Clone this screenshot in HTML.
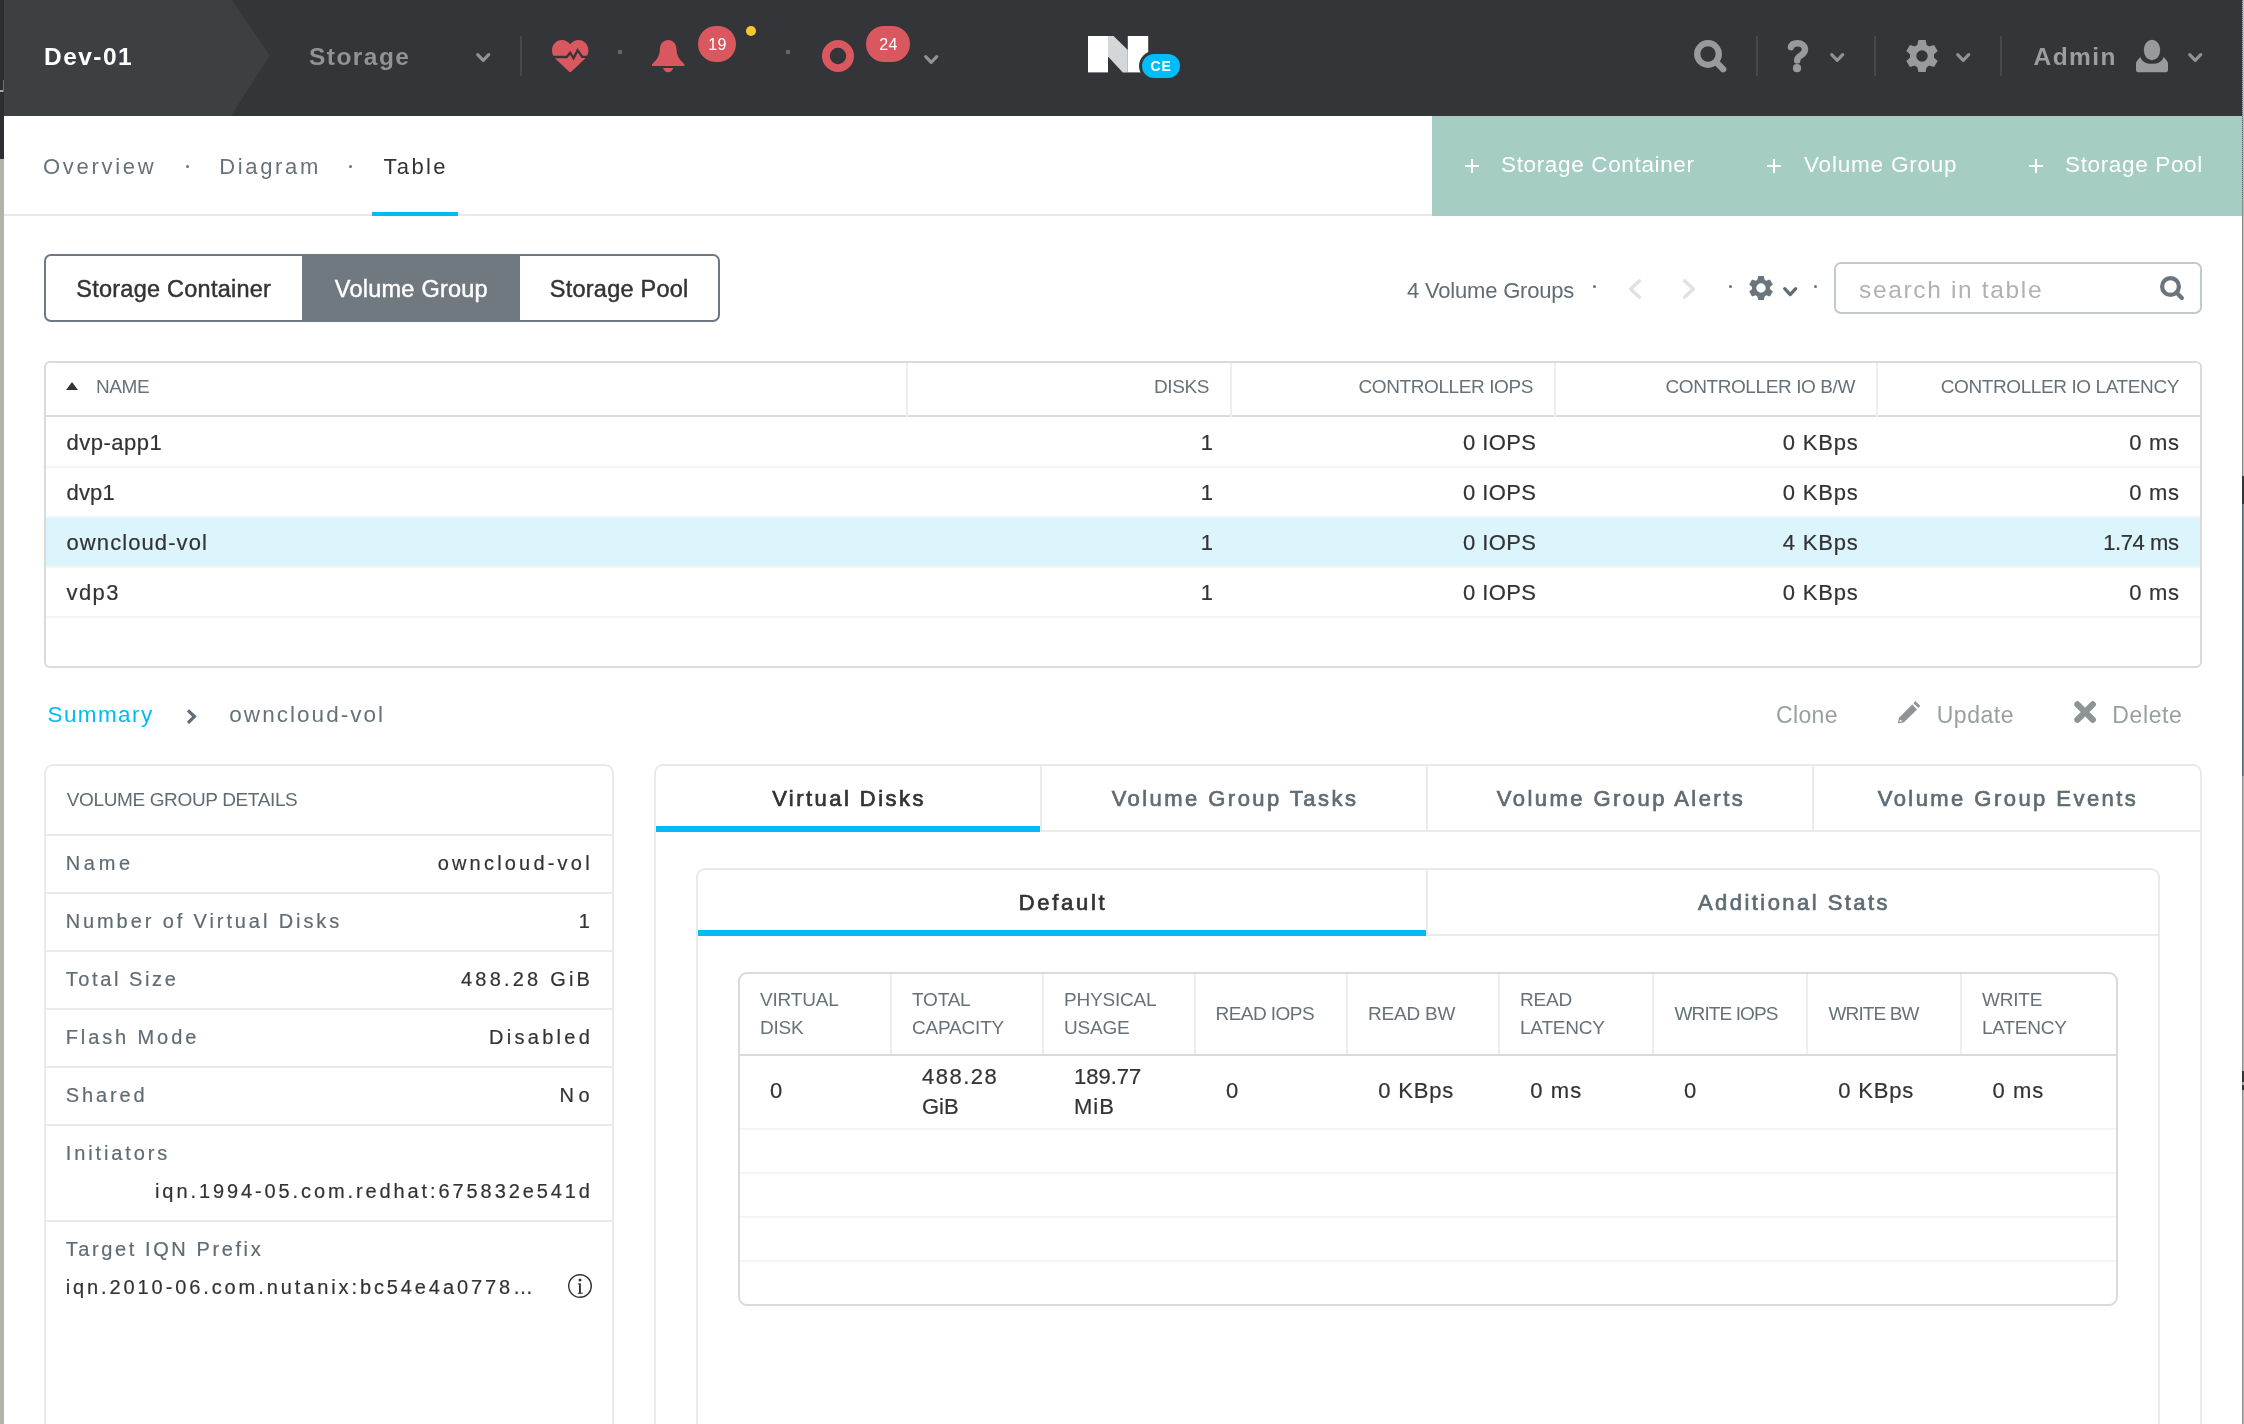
<!DOCTYPE html>
<html lang="en">
<head>
<meta charset="utf-8">
<title>Dev-01 - Storage</title>
<style>
*{box-sizing:border-box;margin:0;padding:0}
html,body{width:2244px;height:1424px;overflow:hidden;background:#fff}
body{position:relative;font-family:"Liberation Sans",sans-serif;color:#333;-webkit-font-smoothing:antialiased}
#app{position:absolute;left:0;top:0;width:2244px;height:1424px;overflow:hidden;will-change:transform}
.abs{position:absolute}
.t{position:absolute;white-space:nowrap;line-height:40px;height:40px}
svg{position:absolute;overflow:visible}

/* window edges from the app behind */
#edgeL1{left:0;top:0;width:4px;height:159px;background:#2d2e31}
#edgeL2{left:0;top:159px;width:4px;height:1265px;background:#b3b3ae}
#edgeRa{left:2242px;top:0;width:1px;height:1424px;background:
 linear-gradient(to bottom,transparent 0,transparent 200px,#8a8d8e 200px,#8a8d8e 476px,#343537 476px,#343537 504px,#5d6670 504px,#5d6670 776px,#8e9091 776px,#8e9091 1071px,#333 1071px,#333 1082px,#8e9091 1082px,#8e9091 1085px,#333 1085px,#333 1090px,#8e9091 1090px),
 repeating-linear-gradient(to bottom,#5f6c7a 0,#5f6c7a 1px,#a3a5a6 1px,#a3a5a6 2px)}
#edgeRb{left:2243px;top:0;width:1px;height:1424px;background:
 linear-gradient(to bottom,#bcbcb9 0,#bcbcb9 476px,#343537 476px,#343537 504px,#7b8a95 504px,#7b8a95 776px,#b5b5b0 776px,#b5b5b0 1071px,#3a3a3a 1071px,#3a3a3a 1082px,#b5b5b0 1082px,#b5b5b0 1085px,#3a3a3a 1085px,#3a3a3a 1090px,#b5b5b0 1090px)}
#edgeMk1{left:3px;top:80px;width:1px;height:12px;background:#6b6c6d}
#edgeMk2{left:0;top:90px;width:3px;height:2px;background:#a9aaaa}

/* ---------- top bar ---------- */
#top{left:4px;top:0;width:2238px;height:116px;background:#333538}
.hb{font-weight:700;font-size:24.5px;letter-spacing:1.45px}
.vdiv{position:absolute;top:36px;width:2px;height:40px;background:#46484b}
.sq{position:absolute;top:50px;width:4px;height:4px;background:#65676a}
.badge{position:absolute;top:26px;height:36px;border-radius:18px;background:#d9575f;color:#fff;font-size:16px;line-height:37px;text-align:center;letter-spacing:.4px;padding-left:1px}

/* ---------- sub nav ---------- */
#sub{left:4px;top:116px;width:2238px;height:100px;background:#fff;border-bottom:2px solid #e6e8e9}
.nav{font-size:22px;letter-spacing:2.7px;color:#66727a}
#green{left:1432px;top:116px;width:810px;height:100px;background:#a6cdc3}
.gt{font-size:22.5px;letter-spacing:.65px;color:#fff;margin-top:.5px}

/* ---------- toolbar ---------- */
#seg{left:44px;top:254px;width:676px;height:68px;border:2px solid #6f7880;border-radius:7px;background:#fff;overflow:hidden}
#segA{left:302px;top:254px;width:218px;height:68px;background:#707880}
.sg{font-size:23.5px;letter-spacing:.24px;margin-top:.5px;color:#333;-webkit-text-stroke:.45px #333}
#sbox{left:1834px;top:262px;width:368px;height:52px;border:2px solid #c3cacc;border-radius:7px;background:#fff}
.dot{position:absolute;top:285px;width:3px;height:3px;border-radius:2px;background:#66727a}

/* ---------- main table ---------- */
#mt{left:44px;top:361px;width:2158px;height:307px;border:2px solid #d9dbdb;border-radius:6px;background:#fff}
.mth{position:absolute;left:46px;top:363px;width:2154px;height:54px;border-bottom:2px solid #d9dbdb}
.cs{position:absolute;top:363px;width:2px;height:54px;background:#eceeef}
.th{font-size:19px;color:#66727a;letter-spacing:-.4px}
.rowline{position:absolute;left:46px;width:2154px;height:2px;background:#f4f5f5}
.td{margin-top:1px;font-size:22px;color:#333;line-height:50px;height:50px;-webkit-text-stroke:.2px #333}
.r{text-align:right}

/* ---------- summary bar ---------- */
.sm{margin-top:1px;font-size:22.5px;letter-spacing:1.6px}
.act{margin-top:1px;font-size:23px;color:#999f9f;letter-spacing:.3px}

/* ---------- panels ---------- */
.panel{position:absolute;border:2px solid #e8eaeb;border-radius:9px;background:#fff}
.hl{position:absolute;height:2px;background:#e8eaeb}
.vl{position:absolute;width:2px;background:#e8eaeb}
.dl{font-size:20px;letter-spacing:2.9px;color:#606c74;-webkit-text-stroke:.2px #606c74}
.dv{font-size:20px;letter-spacing:2.9px;color:#333;text-align:right;-webkit-text-stroke:.2px #333}
.tab{font-size:22px;letter-spacing:2.45px;color:#606c74;text-align:center;-webkit-text-stroke:.7px currentColor;padding-left:2px}
.ih{font-size:19px;color:#66727a;line-height:28px;height:auto;letter-spacing:-.2px}
.id{font-size:22px;color:#333;line-height:30px;height:auto;-webkit-text-stroke:.2px #333}
</style>
</head>
<body>
<div id="app">

<!-- ================= TOP BAR ================= -->
<div class="abs" id="top"></div>
<div class="abs" id="edgeL1"></div>
<div class="abs" id="edgeL2"></div>
<div class="abs" id="edgeRa"></div>
<div class="abs" id="edgeRb"></div>
<div class="abs" id="edgeMk1"></div>
<div class="abs" id="edgeMk2"></div>

<svg style="left:4px;top:0" width="270" height="116"><polygon points="0,0 228,0 266,55.5 227,116 0,116" fill="#3e3f42"/></svg>
<div class="t hb" id="hd1" style="left:44px;top:37px;color:#fff">Dev-01</div>
<div class="t hb" id="hd2" style="left:309px;top:37px;color:#8f9396">Storage</div>
<svg style="left:476px;top:52.6px" width="15" height="10"><polyline points="1.7,1.7 7.2,7.3 12.7,1.7" fill="none" stroke="#8f9396" stroke-width="3.2" stroke-linecap="round" stroke-linejoin="round"/></svg>
<div class="vdiv" style="left:520px"></div>

<div class="sq" style="left:618px"></div>
<div class="sq" style="left:786px"></div>
<div class="badge" style="left:698px;width:38px">19</div>
<div class="abs" style="left:746px;top:26px;width:10px;height:10px;border-radius:5px;background:#fcc72e"></div>
<div class="badge" style="left:866px;width:44px">24</div>
<svg style="left:924px;top:54.8px" width="15" height="10"><polyline points="1.7,1.7 7.2,7.3 12.7,1.7" fill="none" stroke="#8f9396" stroke-width="3.2" stroke-linecap="round" stroke-linejoin="round"/></svg>

<div class="vdiv" style="left:1756px"></div>
<div class="vdiv" style="left:1874px"></div>
<div class="vdiv" style="left:2000px"></div>
<svg style="left:1830px;top:52.6px" width="15" height="10"><polyline points="1.7,1.7 7.2,7.3 12.7,1.7" fill="none" stroke="#8f9396" stroke-width="3.2" stroke-linecap="round" stroke-linejoin="round"/></svg>
<svg style="left:1956px;top:52.6px" width="15" height="10"><polyline points="1.7,1.7 7.2,7.3 12.7,1.7" fill="none" stroke="#8f9396" stroke-width="3.2" stroke-linecap="round" stroke-linejoin="round"/></svg>
<svg style="left:2188px;top:52.6px" width="15" height="10"><polyline points="1.7,1.7 7.2,7.3 12.7,1.7" fill="none" stroke="#8f9396" stroke-width="3.2" stroke-linecap="round" stroke-linejoin="round"/></svg>
<div class="t hb" id="hd3" style="left:2033.5px;top:37px;color:#9b9d9f">Admin</div>


<!-- health heart -->
<svg style="left:552px;top:40px" width="36.4" height="32.3" viewBox="0 0 36.4 32.3">
  <path d="M16.9,31.4 L3.4,18.7 C1,16.2 0,13.2 0,10.2 C0,4.5 4.4,0 9.8,0 C13.2,0 16.3,1.6 18.2,4.3 C20.1,1.6 23.2,0 26.6,0 C32,0 36.4,4.5 36.4,10.2 C36.4,13.2 35.4,16.2 33,18.7 L19.5,31.4 C18.7,32.2 17.7,32.2 16.9,31.4 Z" fill="#d9575f"/>
  <polyline points="-0.5,17 14.7,17 18.1,12.7 21.6,18.2 25.6,10.2 30.2,16.8 37,16.8" fill="none" stroke="#333538" stroke-width="2.3" stroke-linejoin="miter"/>
</svg>
<!-- alerts bell -->
<svg style="left:651.8px;top:40px" width="32.4" height="32.3" viewBox="0 0 32.4 32.3">
  <path d="M16.2,0 C11.5,0 8.2,3.6 8,8.5 C7.8,13 6.6,17.3 3.6,20.6 L0,24.2 L0,25.9 L32.4,25.9 L32.4,24.2 L28.8,20.6 C25.8,17.3 24.6,13 24.4,8.5 C24.2,3.6 20.9,0 16.2,0 Z" fill="#d9575f"/>
  <path d="M11,28 L21.4,28 C20.3,30.6 18.4,32.3 16.2,32.3 C14,32.3 12.1,30.6 11,28 Z" fill="#d9575f"/>
</svg>
<!-- tasks ring -->
<svg style="left:822px;top:40px" width="32" height="32"><circle cx="16" cy="16" r="12.1" fill="none" stroke="#d9575f" stroke-width="7.8"/></svg>

<!-- Nutanix N + CE -->
<svg style="left:1086px;top:34px" width="98" height="46">
  <rect x="2" y="2" width="20" height="36.4" fill="#fff"/>
  <rect x="41.8" y="2" width="20.4" height="36.4" fill="#fff"/>
  <polygon points="22,2 27.6,2 41.8,16 41.8,38.4 36.8,38.4 22,22.4" fill="#d4d6d7"/>
  <rect x="53" y="17" width="44" height="30" rx="15" fill="#333538"/>
  <rect x="56" y="20" width="38" height="24" rx="12" fill="#00bdf9"/>
</svg>
<div class="t" style="left:1142px;top:46px;width:38px;text-align:center;color:#fff;font-size:14px;font-weight:700;letter-spacing:.8px;padding-left:0px">CE</div>

<!-- search -->
<svg style="left:1694px;top:40px" width="33" height="33"><circle cx="14" cy="14" r="10.8" fill="none" stroke="#989b9d" stroke-width="6.3"/><line x1="22.5" y1="22.5" x2="29.2" y2="29.2" stroke="#989b9d" stroke-width="6.3" stroke-linecap="round"/></svg>
<!-- help -->
<svg style="left:1784px;top:36px" width="28" height="40"><path d="M6.9,11.2 C7.6,8.2 10.4,7.2 13.4,7.2 C17.6,7.2 21,9.6 21,13.5 C21,16.8 18.6,18.4 16.2,19.9 C14.1,21.2 13.2,22.3 13.2,24.4" fill="none" stroke="#989b9d" stroke-width="6.4" stroke-linecap="round"/><circle cx="13" cy="32.2" r="4.1" fill="#989b9d"/></svg>
<!-- settings gear -->
<svg style="left:1906px;top:40px" width="32" height="33" viewBox="-16 -16 32 33">
  <g fill="#989b9d">
    <polygon id="tooth" points="-3.6,-16 3.6,-16 4.9,-10 -4.9,-10"/>
    <polygon points="-3.6,-16 3.6,-16 4.9,-10 -4.9,-10" transform="rotate(60)"/>
    <polygon points="-3.6,-16 3.6,-16 4.9,-10 -4.9,-10" transform="rotate(120)"/>
    <polygon points="-3.6,-16 3.6,-16 4.9,-10 -4.9,-10" transform="rotate(180)"/>
    <polygon points="-3.6,-16 3.6,-16 4.9,-10 -4.9,-10" transform="rotate(240)"/>
    <polygon points="-3.6,-16 3.6,-16 4.9,-10 -4.9,-10" transform="rotate(300)"/>
  </g>
  <circle cx="0" cy="0" r="8.9" fill="none" stroke="#989b9d" stroke-width="6.4"/>
</svg>
<!-- user -->
<svg style="left:2136px;top:40px" width="32" height="33">
  <ellipse cx="16" cy="10" rx="8.2" ry="10.2" fill="#989b9d"/>
  <path d="M0,30 L0,24 C0,22 1,20.6 4.5,17 C6,22 10,23.8 16,23.8 C22,23.8 26,22 27.5,17 C31,20.6 32,22 32,24 L32,30 C32,31.2 31.2,32.2 30,32.2 L2,32.2 C0.8,32.2 0,31.2 0,30 Z" fill="#989b9d"/>
</svg>

<!-- ================= SUB NAV ================= -->
<div class="abs" id="sub"></div>
<div class="t nav" id="n1" style="left:43px;top:147px">Overview</div>
<div class="abs" style="left:186px;top:165px;width:3px;height:3px;border-radius:2px;background:#66727a"></div>
<div class="t nav" id="n2" style="left:219.3px;top:147px;letter-spacing:2.63px">Diagram</div>
<div class="abs" style="left:349px;top:165px;width:3px;height:3px;border-radius:2px;background:#66727a"></div>
<div class="t nav" id="n3" style="left:383.5px;top:147px;color:#333;letter-spacing:2.37px">Table</div>
<div class="abs" style="left:372px;top:212px;width:86px;height:4px;background:#00bbf3"></div>

<div class="abs" id="green"></div>
<svg style="left:1465px;top:159px" width="14" height="14"><path d="M7,0V14M0,7H14" stroke="#fff" stroke-width="2.1" fill="none"/></svg><svg style="left:1767px;top:159px" width="14" height="14"><path d="M7,0V14M0,7H14" stroke="#fff" stroke-width="2.1" fill="none"/></svg><svg style="left:2029px;top:159px" width="14" height="14"><path d="M7,0V14M0,7H14" stroke="#fff" stroke-width="2.1" fill="none"/></svg>
<div class="t gt" id="g1" style="left:1501px;top:144px">Storage Container</div>
<div class="t gt" id="g2" style="letter-spacing:.8px;left:1804px;top:144px">Volume Group</div>
<div class="t gt" id="g3" style="left:2065px;top:144px">Storage Pool</div>


<!-- ================= TOOLBAR ================= -->
<div class="abs" id="seg"></div>
<div class="abs" id="segA"></div>
<div class="t sg" id="sg1" style="left:76.3px;top:268px">Storage Container</div>
<div class="t sg" id="sg2" style="left:334.8px;top:268px;color:#fff;-webkit-text-stroke-color:#fff">Volume Group</div>
<div class="t sg" id="sg3" style="left:549.8px;top:268px">Storage Pool</div>

<div class="t" id="cnt" style="left:1407px;top:271px;font-size:22px;color:#606c74;letter-spacing:-.19px">4 Volume Groups</div>
<div class="dot" style="left:1593px"></div>
<svg style="left:1628px;top:279px" width="14" height="21"><polyline points="11.5,1.8 2.6,10 11.5,18.2" fill="none" stroke="#dfe2e3" stroke-width="3.4" stroke-linecap="round" stroke-linejoin="round"/></svg>
<svg style="left:1682px;top:279px" width="14" height="21"><polyline points="2.5,1.8 11.4,10 2.5,18.2" fill="none" stroke="#dfe2e3" stroke-width="3.4" stroke-linecap="round" stroke-linejoin="round"/></svg>
<div class="dot" style="left:1729px"></div>
<svg style="left:1749px;top:275.6px" width="24" height="24" viewBox="-12 -12 24 24">
  <g fill="#6b757d">
    <polygon points="-2.8,-12 2.8,-12 3.8,-7.4 -3.8,-7.4"/>
    <polygon points="-2.8,-12 2.8,-12 3.8,-7.4 -3.8,-7.4" transform="rotate(60)"/>
    <polygon points="-2.8,-12 2.8,-12 3.8,-7.4 -3.8,-7.4" transform="rotate(120)"/>
    <polygon points="-2.8,-12 2.8,-12 3.8,-7.4 -3.8,-7.4" transform="rotate(180)"/>
    <polygon points="-2.8,-12 2.8,-12 3.8,-7.4 -3.8,-7.4" transform="rotate(240)"/>
    <polygon points="-2.8,-12 2.8,-12 3.8,-7.4 -3.8,-7.4" transform="rotate(300)"/>
  </g>
  <circle cx="0" cy="0" r="6.9" fill="none" stroke="#6b757d" stroke-width="4.4"/>
</svg>
<svg style="left:1782.6px;top:287.4px" width="15" height="10"><polyline points="1.7,1.7 7.2,7.6 12.7,1.7" fill="none" stroke="#5f6a72" stroke-width="3.2" stroke-linecap="round" stroke-linejoin="round"/></svg>
<div class="dot" style="left:1814px"></div>
<div class="abs" id="sbox"></div>
<div class="t" id="ph" style="left:1859px;top:270px;font-size:24.5px;color:#b1b2ae;letter-spacing:1.66px">search in table</div>
<svg style="left:2160px;top:275.6px" width="25" height="25"><circle cx="10.5" cy="10.5" r="8.4" fill="none" stroke="#6b757d" stroke-width="4.2"/><line x1="16.8" y1="16.8" x2="21.8" y2="21.9" stroke="#6b757d" stroke-width="4.3" stroke-linecap="round"/></svg>

<!-- ================= MAIN TABLE ================= -->
<div class="abs" id="mt"></div>
<div class="mth"></div>
<div class="cs" style="left:906px"></div>
<div class="cs" style="left:1230px"></div>
<div class="cs" style="left:1554px"></div>
<div class="cs" style="left:1876px"></div>
<svg style="left:66px;top:382px" width="12" height="8"><polygon points="0,8 12,8 6,0" fill="#333"/></svg>
<div class="t th" id="h1" style="left:96px;top:367px">NAME</div>
<div class="t th r" id="h2" style="left:1009px;width:200px;top:367px">DISKS</div>
<div class="t th r" id="h3" style="left:1233px;width:300px;top:367px">CONTROLLER IOPS</div>
<div class="t th r" id="h4" style="left:1555px;width:300px;top:367px">CONTROLLER IO B/W</div>
<div class="t th r" id="h5" style="left:1879px;width:300px;top:367px">CONTROLLER IO LATENCY</div>

<div class="abs" style="left:46px;top:518px;width:2154px;height:48px;background:#dcf4fc"></div>
<div class="rowline" style="top:466px"></div>
<div class="rowline" style="top:516px"></div>
<div class="rowline" style="top:566px"></div>
<div class="rowline" style="top:616px"></div>

<div class="t td" id="r1a" style="left:66.5px;top:417px;letter-spacing:.49px">dvp-app1</div>
<div class="t td r" style="left:1013px;width:200px;top:417px">1</div>
<div class="t td r" id="r1c" style="left:1236.4px;width:300px;top:417px;letter-spacing:.4px">0 IOPS</div>
<div class="t td r" id="r1d" style="left:1558.6px;width:300px;top:417px;letter-spacing:.8px">0 KBps</div>
<div class="t td r" id="r1e" style="left:1879.7px;width:300px;top:417px;letter-spacing:.7px">0 ms</div>

<div class="t td" id="r2a" style="left:66.5px;top:467px;letter-spacing:.15px">dvp1</div>
<div class="t td r" style="left:1013px;width:200px;top:467px">1</div>
<div class="t td r" style="left:1236.4px;width:300px;top:467px;letter-spacing:.4px">0 IOPS</div>
<div class="t td r" style="left:1558.6px;width:300px;top:467px;letter-spacing:.8px">0 KBps</div>
<div class="t td r" style="left:1879.7px;width:300px;top:467px;letter-spacing:.7px">0 ms</div>

<div class="t td" id="r3a" style="left:66.5px;top:517px;letter-spacing:1.09px">owncloud-vol</div>
<div class="t td r" style="left:1013px;width:200px;top:517px">1</div>
<div class="t td r" style="left:1236.4px;width:300px;top:517px;letter-spacing:.4px">0 IOPS</div>
<div class="t td r" style="left:1558.6px;width:300px;top:517px;letter-spacing:.8px">4 KBps</div>
<div class="t td r" id="r3e" style="left:1878.6px;width:300px;top:517px;letter-spacing:-.4px">1.74 ms</div>

<div class="t td" id="r4a" style="left:66.5px;top:567px;letter-spacing:1.4px">vdp3</div>
<div class="t td r" style="left:1013px;width:200px;top:567px">1</div>
<div class="t td r" style="left:1236.4px;width:300px;top:567px;letter-spacing:.4px">0 IOPS</div>
<div class="t td r" style="left:1558.6px;width:300px;top:567px;letter-spacing:.8px">0 KBps</div>
<div class="t td r" style="left:1879.7px;width:300px;top:567px;letter-spacing:.7px">0 ms</div>

<!-- ================= SUMMARY BAR ================= -->
<div class="t sm" id="s1" style="left:47.5px;top:694px;color:#00bbf3;letter-spacing:1.4px">Summary</div>
<svg style="left:186px;top:709px" width="12" height="16"><polyline points="2,1.4 8.4,7.6 2,13.8" fill="none" stroke="#606c74" stroke-width="3.2" stroke-linejoin="miter"/></svg>
<div class="t sm" id="s2" style="left:229.3px;top:694px;color:#66727a;letter-spacing:2.04px">owncloud-vol</div>

<div class="t act" id="a1" style="left:1776px;top:694px;letter-spacing:.37px">Clone</div>
<svg style="left:1898px;top:701px" width="23" height="23">
  <polygon points="17.4,0 22.3,5 20.4,7 15.5,2.2" fill="#8e9394"/>
  <polygon points="14.2,3.6 19,8.4 6,21.3 1.3,16.4" fill="#8e9394"/>
  <polygon points="1.6,16.8 5.6,20.9 0.6,21.6" fill="#fff" stroke="#8e9394" stroke-width="1.2" stroke-linejoin="round"/>
</svg>
<div class="t act" id="a2" style="left:1936.7px;top:694px;letter-spacing:.54px">Update</div>
<svg style="left:2074px;top:701px" width="23" height="23"><path d="M3.4,3.4L18.8,18.8M18.8,3.4L3.4,18.8" stroke="#8e9394" stroke-width="6.2" stroke-linecap="round" fill="none"/></svg>
<div class="t act" id="a3" style="left:2112.3px;top:694px;letter-spacing:.62px">Delete</div>

<!-- ================= DETAILS PANEL ================= -->
<div class="panel" style="left:44px;top:764px;width:570px;height:700px"></div>
<div class="t" id="d0" style="left:66.7px;top:780px;font-size:19px;color:#606c74;letter-spacing:-.36px">VOLUME GROUP DETAILS</div>
<div class="hl" style="left:46px;width:566px;top:834px"></div>
<div class="hl" style="left:46px;width:566px;top:892px"></div>
<div class="hl" style="left:46px;width:566px;top:950px"></div>
<div class="hl" style="left:46px;width:566px;top:1008px"></div>
<div class="hl" style="left:46px;width:566px;top:1066px"></div>
<div class="hl" style="left:46px;width:566px;top:1124px"></div>
<div class="hl" style="left:46px;width:566px;top:1220px"></div>

<div class="t dl" id="d1" style="left:65.7px;letter-spacing:3.7px;top:843px">Name</div>
<div class="t dv" id="v1" style="left:292px;width:300.8px;letter-spacing:3.2px;top:843px">owncloud-vol</div>
<div class="t dl" id="d2" style="left:65.7px;top:901px">Number of Virtual Disks</div>
<div class="t dv" id="v2" style="left:292px;width:300.8px;top:901px">1</div>
<div class="t dl" id="d3" style="left:65.7px;letter-spacing:2.6px;top:959px">Total Size</div>
<div class="t dv" id="v3" style="left:292px;width:301.1px;letter-spacing:3.2px;top:959px">488.28 GiB</div>
<div class="t dl" id="d4" style="left:65.7px;top:1017px">Flash Mode</div>
<div class="t dv" id="v4" style="left:292px;width:301.2px;letter-spacing:3.3px;top:1017px">Disabled</div>
<div class="t dl" id="d5" style="left:65.7px;top:1075px">Shared</div>
<div class="t dv" id="v5" style="left:292px;width:302.2px;letter-spacing:4.6px;top:1075px">No</div>
<div class="t dl" id="d6" style="left:65.7px;top:1133px">Initiators</div>
<div class="t dv" id="v6" style="left:92px;width:500.8px;top:1171px">iqn.1994-05.com.redhat:675832e541d</div>
<div class="t dl" id="d7" style="left:65.7px;letter-spacing:2.6px;top:1229px">Target IQN Prefix</div>
<div class="t dv" id="v7" style="left:65.7px;top:1267px;text-align:left">iqn.2010-06.com.nutanix:bc54e4a0778…</div>
<svg style="left:568px;top:1273.8px" width="24" height="24"><circle cx="12" cy="12" r="11.3" fill="none" stroke="#333" stroke-width="1.4"/><circle cx="12" cy="5.9" r="1.5" fill="#333"/><rect x="11" y="9.4" width="1.9" height="10" fill="#333"/><rect x="9.8" y="9.4" width="1.6" height="1" fill="#333"/><rect x="9.8" y="18.7" width="4.9" height="1.1" fill="#333"/></svg>

<!-- ================= RIGHT PANEL ================= -->
<div class="panel" style="left:654px;top:764px;width:1548px;height:700px"></div>
<div class="hl" style="left:656px;width:1544px;top:830px"></div>
<div class="vl" style="left:1040px;top:766px;height:64px"></div>
<div class="vl" style="left:1426px;top:766px;height:64px"></div>
<div class="vl" style="left:1812px;top:766px;height:64px"></div>
<div class="abs" style="left:656px;top:826px;width:384px;height:6px;background:#00bbf3"></div>
<div class="t tab" style="left:656px;width:384px;top:779px;color:#333"><span id="t1">Virtual Disks</span></div>
<div class="t tab" style="left:1042px;width:384px;top:779px"><span id="t2">Volume Group Tasks</span></div>
<div class="t tab" style="left:1428px;width:384px;top:779px"><span id="t3">Volume Group Alerts</span></div>
<div class="t tab" style="left:1814px;width:386px;top:779px"><span id="t4">Volume Group Events</span></div>

<div class="panel" style="left:696px;top:868px;width:1464px;height:600px"></div>
<div class="hl" style="left:698px;width:1460px;top:934px"></div>
<div class="vl" style="left:1426px;top:870px;height:64px"></div>
<div class="abs" style="left:698px;top:930px;width:728px;height:6px;background:#00bbf3"></div>
<div class="t tab" style="left:698px;width:728px;top:883px;color:#333"><span id="t5" style="letter-spacing:2.7px">Default</span></div>
<div class="t tab" style="left:1428px;width:730px;top:883px"><span id="t6">Additional Stats</span></div>

<!-- inner table -->
<div class="abs" style="left:738px;top:972px;width:1380px;height:334px;border:2px solid #d9dbdb;border-radius:9px;background:#fff"></div>
<div class="abs" style="left:740px;top:1054px;width:1376px;height:2px;background:#d9dbdb"></div>
<div class="vl" style="left:890px;top:974px;height:80px;background:#eceeef"></div>
<div class="vl" style="left:1042px;top:974px;height:80px;background:#eceeef"></div>
<div class="vl" style="left:1194px;top:974px;height:80px;background:#eceeef"></div>
<div class="vl" style="left:1346px;top:974px;height:80px;background:#eceeef"></div>
<div class="vl" style="left:1498px;top:974px;height:80px;background:#eceeef"></div>
<div class="vl" style="left:1652px;top:974px;height:80px;background:#eceeef"></div>
<div class="vl" style="left:1806px;top:974px;height:80px;background:#eceeef"></div>
<div class="vl" style="left:1960px;top:974px;height:80px;background:#eceeef"></div>

<div class="t ih" id="i1" style="left:760px;top:986px">VIRTUAL<br>DISK</div>
<div class="t ih" id="i2" style="left:912px;top:986px">TOTAL<br>CAPACITY</div>
<div class="t ih" id="i3" style="left:1064px;top:986px">PHYSICAL<br>USAGE</div>
<div class="t ih" id="i4" style="left:1215.6px;top:1000px;letter-spacing:-.56px">READ IOPS</div>
<div class="t ih" id="i5" style="left:1368px;top:1000px">READ BW</div>
<div class="t ih" id="i6" style="left:1520px;top:986px">READ<br>LATENCY</div>
<div class="t ih" id="i7" style="left:1674.5px;top:1000px;letter-spacing:-.88px">WRITE IOPS</div>
<div class="t ih" id="i8" style="left:1828.5px;top:1000px;letter-spacing:-.87px">WRITE BW</div>
<div class="t ih" id="i9" style="left:1982px;top:986px">WRITE<br>LATENCY</div>

<div class="t id"None style="left:770px;top:1076px">0</div>
<div class="t id" id="c2" style="left:922px;top:1062px"><span id="c2a" style="letter-spacing:1.5px">488.28</span><br>GiB</div>
<div class="t id" id="c3" style="left:1074px;top:1062px"><span id="c3a">189.77</span><br><span style="letter-spacing:1px">MiB</span></div>
<div class="t id"None style="left:1226px;top:1076px">0</div>
<div class="t id" id="c5" style="left:1378.3px;top:1076px;letter-spacing:.8px">0 KBps</div>
<div class="t id" id="c6" style="left:1530.2px;top:1076px;letter-spacing:1.1px">0 ms</div>
<div class="t id"None style="left:1684px;top:1076px">0</div>
<div class="t id" id="c8" style="left:1838.3px;top:1076px;letter-spacing:.8px">0 KBps</div>
<div class="t id" id="c9" style="left:1992.4px;top:1076px;letter-spacing:1.1px">0 ms</div>

<div class="rowline" style="left:740px;width:1376px;top:1128px"></div>
<div class="rowline" style="left:740px;width:1376px;top:1172px"></div>
<div class="rowline" style="left:740px;width:1376px;top:1216px"></div>
<div class="rowline" style="left:740px;width:1376px;top:1260px"></div>

</div>
</body>
</html>
